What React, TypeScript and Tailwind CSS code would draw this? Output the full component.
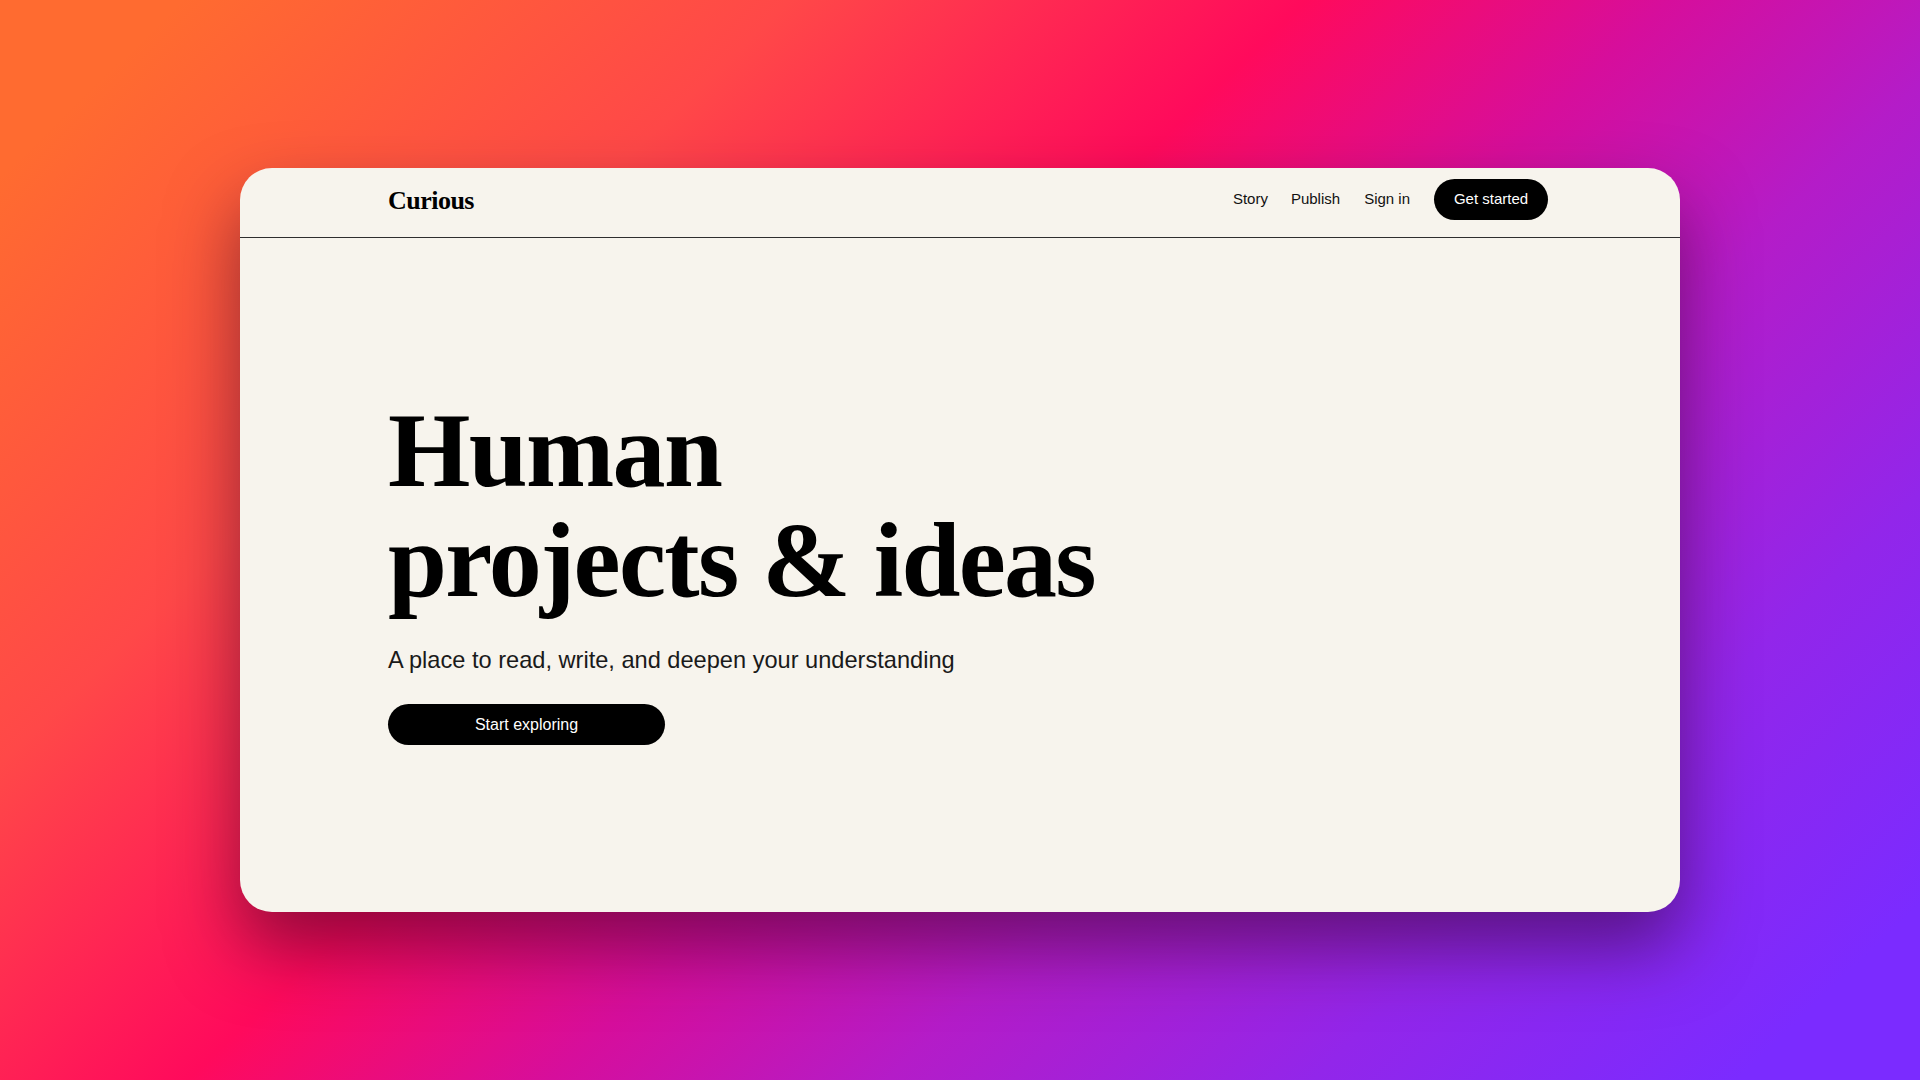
export default function App() {
  return (
    <div className="relative w-full h-[1080px] flex justify-center pt-[168px] overflow-hidden">
      <div className="absolute inset-0 bg-[linear-gradient(136deg,#ff6b30_6%,#ff4848_26%,#ff0a5c_43%,#d60e9c_55%,#b41cc8_66%,#9226ea_80%,#7b2bff_94%)]" />
      <div className="relative w-[1440px] h-[744px] rounded-[32px] bg-[#f7f4ed] shadow-[0_36px_70px_rgba(40,0,30,0.5)] flex flex-col overflow-hidden">
        <header className="h-[70px] shrink-0 border-b-[1.5px] border-[#2e2e2e] flex items-center justify-between pl-[148px] pr-[132px] pb-[6px]">
          <div className="font-['Liberation_Serif',serif] font-bold text-[26px] tracking-[-0.02em] text-black leading-none pt-[3px]">
            Curious
          </div>
          <nav className="flex items-center font-['Liberation_Sans',Arial,sans-serif] text-[15px] text-[#111]">
            <a className="mr-[23px]">Story</a>
            <a className="mr-[24px]">Publish</a>
            <a className="mr-[24px]">Sign in</a>
            <button className="h-[41px] w-[114px] rounded-full bg-black text-white text-[15px]">
              Get started
            </button>
          </nav>
        </header>
        <main className="pl-[148px] pt-[158px] flex flex-col items-start">
          <h1 className="font-['Liberation_Serif',serif] font-bold text-[106px] leading-[110px] tracking-[-0.016em] text-black">
            Human
            <br />
            projects &amp; ideas
          </h1>
          <p className="mt-[28px] font-['Liberation_Sans',Arial,sans-serif] text-[23.6px] leading-[32px] text-[#1a1a1a] font-light">
            A place to read, write, and deepen your understanding
          </p>
          <button className="mt-[28px] h-[41px] w-[277px] rounded-full bg-black text-white font-['Liberation_Sans',Arial,sans-serif] text-[16px]">
            Start exploring
          </button>
        </main>
      </div>
    </div>
  );
}
